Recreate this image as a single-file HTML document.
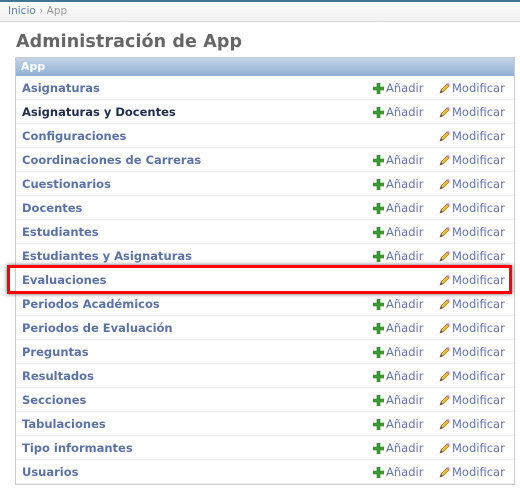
<!DOCTYPE html>
<html><head><meta charset="utf-8">
<style>
*{margin:0;padding:0;box-sizing:border-box}
body{width:520px;height:490px;background:#fff;font-family:"DejaVu Sans",Verdana,sans-serif;position:relative;overflow:hidden}
#top{position:absolute;left:0;top:0;width:520px;height:2px;background:#417690}
#bc{position:absolute;left:0;top:2px;width:520px;height:20px;background:linear-gradient(#fafafa,#f3f3f3);border-bottom:1px solid #d8d8d8;font-size:10.5px;color:#999;padding:3px 0 0 8px}
#bc a{color:#5b80b2}
h1{position:absolute;left:16px;top:32px;font-size:17.5px;font-weight:bold;color:#666;letter-spacing:0.1px}
#tbl{position:absolute;left:15px;top:57px;width:500px;height:428px;border:1px solid #ccc}
#hd{position:absolute;left:0;top:0;width:498px;height:18px;background:linear-gradient(#c2d4e8,#8fb0d3);color:#fff;font-weight:bold;font-size:11px;padding:2px 0 0 5px}
.r{position:absolute;left:0;width:498px;height:24px;border-bottom:1px solid #eee}
.n{position:absolute;left:6px;top:5px;font-size:11.5px;font-weight:bold;color:#5b72a8}
.a,.m{position:absolute;top:5px;font-size:11.5px;color:#6474b4}
.a{left:370px}.m{left:436px}
.a svg,.m svg{position:absolute;left:-13px;top:2px}
#box{position:absolute;left:7px;top:265px;width:505px;height:29px;border:3px solid #f00;box-shadow:0 0 4px rgba(0,0,0,.6)}
</style></head><body>
<div id="top"></div>
<div id="bc"><a>Inicio</a> › App</div>
<h1>Administración de App</h1>
<div id="tbl">
<div id="hd">App</div>
</div>
<div id="box"></div>
<script>
var rows=[["Asignaturas",1],["Asignaturas y Docentes",1,"#1f2d4d"],["Configuraciones",0],["Coordinaciones de Carreras",1],["Cuestionarios",1],["Docentes",1],["Estudiantes",1],["Estudiantes y Asignaturas",1],["Evaluaciones",0],["Periodos Académicos",1],["Periodos de Evaluación",1],["Preguntas",1],["Resultados",1],["Secciones",1],["Tabulaciones",1],["Tipo informantes",1],["Usuarios",1]];
var plus='<svg width="11" height="11" viewBox="0 0 11 11"><path d="M4 0h3v4h4v3H7v4H4V7H0V4h4z" fill="#3c9a32" stroke="#2b7a25" stroke-width=".6"/></svg>';
var pen='<svg width="11" height="11" viewBox="0 0 11 11"><path d="M1 10l1-3 6-6 2 2-6 6z" fill="#f0c040" stroke="#a07020" stroke-width=".7"/><path d="M8 1l2 2 1-1-2-2z" fill="#e070c0"/><path d="M1 10l1-3 2 2z" fill="#555"/></svg>';
var t=document.getElementById("tbl"),h="";
rows.forEach(function(r,i){
h+='<div class="r" style="top:'+(18+i*24)+'px"><span class="n"'+(r[2]?' style="color:'+r[2]+'"':'')+'>'+r[0]+'</span>'+(r[1]?'<span class="a">'+plus+'Añadir</span>':'')+'<span class="m">'+pen+'Modificar</span></div>';
});
t.innerHTML+=h;
</script>
</body></html>
